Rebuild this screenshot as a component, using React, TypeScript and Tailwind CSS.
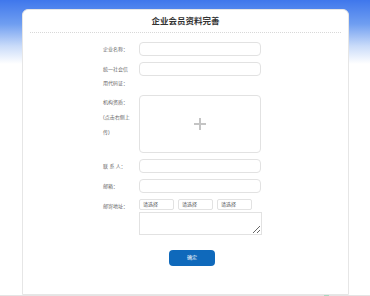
export default function App() {
  const font = { fontFamily: '"Liberation Sans", "Noto Sans CJK SC", sans-serif' }
  const label = 'w-[36px] shrink-0 text-[5px] leading-[14px] text-[#666]'
  const input = 'w-[122px] h-[14px] rounded-[4px] border border-[#e2e2e2] bg-white outline-none'

  return (
    <div
      style={font}
      className="relative h-[296px] w-[370px] overflow-hidden bg-[linear-gradient(to_bottom,#3f77ec_0px,#6f9ef1_24px,#c9dbf9_46px,#ffffff_64px)]"
    >
      <div className="ml-[22px] mt-[9px] h-[286px] w-[327px] rounded-t-[6px] border border-[#e6e6e6] bg-white">
        <div className="mx-[7px] flex h-[23px] items-center justify-center border-b border-dotted border-[#d8d8d8]">
          <h1 className="text-[8.5px] font-bold text-[#333]">企业会员资料完善</h1>
        </div>

        <div className="pl-[80px] pt-[9px]">
          <div className="mb-[6px] flex">
            <div className={label}>企业名称：</div>
            <input className={input} />
          </div>
          <div className="mb-[5px] flex">
            <div className={label}>
              统一社会信
              <br />
              用代码证：
            </div>
            <input className={input} />
          </div>
          <div className="mb-[6px] flex">
            <div className={`${label} leading-[15px]`}>
              机构资质：
              <br />
              (点击右侧上
              <br />
              传)
            </div>
            <div className="flex h-[58px] w-[122px] items-center justify-center rounded-[4px] border border-[#e2e2e2]">
              <svg width="12" height="12" viewBox="0 0 12 12">
                <rect x="5" y="0" width="2" height="12" fill="#c4c4c4" />
                <rect x="0" y="5" width="12" height="2" fill="#c4c4c4" />
              </svg>
            </div>
          </div>
          <div className="mb-[6px] flex">
            <div className={label}>联 系 人：</div>
            <input className={input} />
          </div>
          <div className="mb-[6px] flex">
            <div className={label}>邮箱：</div>
            <input className={input} />
          </div>
          <div className="flex">
            <div className={`${label} leading-[11px]`}>邮寄地址：</div>
            <div>
              <div className="flex gap-[4px]">
                {['请选择', '请选择', '请选择'].map((t, i) => (
                  <div
                    key={i}
                    className="flex h-[11px] w-[35px] items-center rounded-[2px] border border-[#e2e2e2] pl-[3px] text-[5px] text-[#555]"
                  >
                    {t}
                  </div>
                ))}
              </div>
              <textarea className="mt-[2px] block h-[23px] w-[123px] resize-y border border-[#e2e2e2] outline-none" />
            </div>
          </div>
          <button className="ml-[66px] mt-[15px] flex h-[16px] w-[46px] items-center justify-center rounded-[4px] bg-[#0f69bb] text-[5px] text-white">
            确定
          </button>
        </div>
      </div>
      <div className="h-px w-full bg-[#e4e4e4]" />
      <div className="absolute bottom-0 left-[324px] h-[1px] w-[5px] bg-[#a8d8c0]" />
    </div>
  )
}
